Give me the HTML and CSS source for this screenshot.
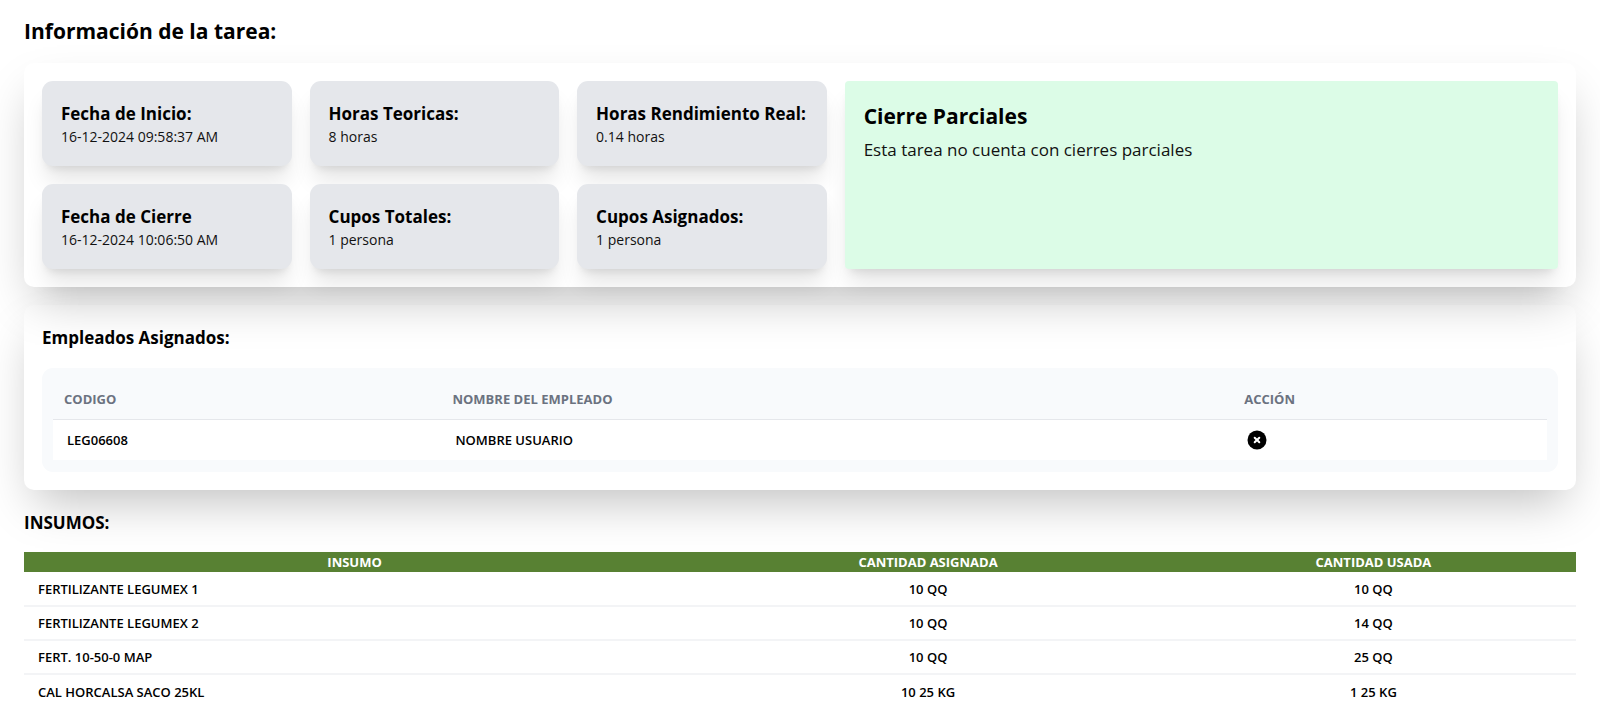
FILE: index.html
```html
<!DOCTYPE html>
<html lang="es">
<head>
<meta charset="utf-8">
<meta name="viewport" content="width=device-width, initial-scale=1">
<title>Información de la tarea</title>
<link rel="stylesheet" href="styles.css">
</head>
<body>
<main class="page">
  <h1 class="page-title">Información de la tarea:</h1>

  <section class="card summary">
    <div class="stats">
      <div class="stat"><h2 class="subtitle">Fecha de Inicio:</h2><p class="stat-value">16-12-2024 09:58:37 AM</p></div>
      <div class="stat"><h2 class="subtitle">Horas Teoricas:</h2><p class="stat-value">8 horas</p></div>
      <div class="stat"><h2 class="subtitle">Horas Rendimiento Real:</h2><p class="stat-value">0.14 horas</p></div>
      <div class="stat"><h2 class="subtitle">Fecha de Cierre</h2><p class="stat-value">16-12-2024 10:06:50 AM</p></div>
      <div class="stat"><h2 class="subtitle">Cupos Totales:</h2><p class="stat-value">1 persona</p></div>
      <div class="stat"><h2 class="subtitle">Cupos Asignados:</h2><p class="stat-value">1 persona</p></div>
    </div>
    <div class="closures">
      <h2 class="closures-title">Cierre Parciales</h2>
      <p class="closures-text">Esta tarea no cuenta con cierres parciales</p>
    </div>
  </section>

  <section class="card employees">
    <h2 class="subtitle">Empleados Asignados:</h2>
    <div class="panel">
      <table class="staff">
        <colgroup><col class="staff-code"><col class="staff-name"><col></colgroup>
        <thead>
          <tr><th scope="col">CODIGO</th><th scope="col">NOMBRE DEL EMPLEADO</th><th scope="col">ACCIÓN</th></tr>
        </thead>
        <tbody>
          <tr>
            <td>LEG06608</td>
            <td>NOMBRE USUARIO</td>
            <td>
              <button class="remove" type="button" aria-label="Quitar empleado">
                <svg class="remove-icon" viewBox="0 0 20 20" aria-hidden="true">
                  <circle cx="10" cy="10" r="9.5" fill="#000"/>
                  <path d="M7.7 7.7l4.6 4.6M12.3 7.7l-4.6 4.6" stroke="#fff" stroke-width="2" stroke-linecap="round"/>
                </svg>
              </button>
            </td>
          </tr>
        </tbody>
      </table>
    </div>
  </section>

  <section class="supplies-section">
    <h2 class="subtitle">INSUMOS:</h2>
    <table class="supplies">
      <colgroup><col class="supply-name"><col class="supply-assigned"><col></colgroup>
      <thead>
        <tr><th scope="col">INSUMO</th><th scope="col">CANTIDAD ASIGNADA</th><th scope="col">CANTIDAD USADA</th></tr>
      </thead>
      <tbody>
        <tr><td>FERTILIZANTE LEGUMEX 1</td><td>10 QQ</td><td>10 QQ</td></tr>
        <tr><td>FERTILIZANTE LEGUMEX 2</td><td>10 QQ</td><td>14 QQ</td></tr>
        <tr><td>FERT. 10-50-0 MAP</td><td>10 QQ</td><td>25 QQ</td></tr>
        <tr><td>CAL HORCALSA SACO 25KL</td><td>10 25 KG</td><td>1 25 KG</td></tr>
      </tbody>
    </table>
  </section>
</main>
</body>
</html>
```
FILE: styles.css
```css
* {
  box-sizing: border-box;
}

body {
  margin: 0;
  background: #fff;
  color: #000;
  font-family: "Segoe UI", "Open Sans", "Noto Sans", sans-serif;
  font-size: 14px;
  line-height: 20px;
}

h1, h2, p {
  margin: 0;
}

.page {
  padding: 16px 24px;
}

.page-title,
.closures-title {
  font-size: 21px;
  font-weight: 700;
  line-height: 30px;
}

.page-title {
  margin-bottom: 17px;
}

.subtitle {
  font-size: 17px;
  font-weight: 700;
  line-height: 25px;
}

.card {
  margin-bottom: 18px;
  padding: 18px;
  border-radius: 10px;
  box-shadow: 0 22px 45px -11px rgba(0, 0, 0, 0.25);
}

.summary {
  display: grid;
  grid-template-columns: 11fr 10fr;
  gap: 18px;
}

.stats {
  display: grid;
  grid-template-columns: repeat(3, 1fr);
  gap: 18px;
}

.stat,
.closures {
  box-shadow: 0 18px 22px -4px rgba(0, 0, 0, 0.1), 0 7px 9px -5px rgba(0, 0, 0, 0.1);
}

.stat {
  padding: 20px 19px 18px;
  border-radius: 11px;
  background: #e5e7eb;
  white-space: nowrap;
}

.stat-value {
  color: #111;
  line-height: 22px;
}

.closures {
  padding: 20px 19px;
  border-radius: 4px;
  background: #dcfce7;
}

.closures-text {
  margin-top: 6px;
  color: #111;
  font-size: 17px;
  line-height: 25px;
}

.employees {
  padding-top: 20px;
}

.panel {
  margin-top: 18px;
  padding: 11px 11px 12px;
  border-radius: 11px;
  background: #f8fafc;
}

.staff,
.supplies {
  width: 100%;
  border-collapse: collapse;
  table-layout: fixed;
  font-size: 13px;
  font-weight: 600;
}

.staff-code {
  width: 26%;
}

.staff-name {
  width: 53%;
}

.staff th {
  height: 40px;
  padding: 0 11px;
  border-bottom: 1px solid #e5e7eb;
  color: #6b7280;
  font-weight: 700;
  text-align: left;
}

.staff td {
  height: 41px;
  padding: 0 14px;
  background: #fff;
}

.remove {
  display: block;
  padding: 0;
  border: 0;
  background: none;
  cursor: pointer;
}

.remove-icon {
  display: block;
  width: 20px;
  height: 20px;
}

.supplies-section {
  padding-top: 2px;
}

.supplies {
  margin-top: 17px;
}

.supply-name {
  width: 42.6%;
}

.supply-assigned {
  width: 31.3%;
}

.supplies th {
  height: 20px;
  padding: 0;
  background: #588133;
  color: #fff;
  font-weight: 700;
}

.supplies td {
  height: 34px;
  padding: 0 14px;
  text-align: center;
}

.supplies td:first-child {
  text-align: left;
}

.supplies tbody tr + tr td {
  border-top: 2px solid #f3f4f6;
}
```
